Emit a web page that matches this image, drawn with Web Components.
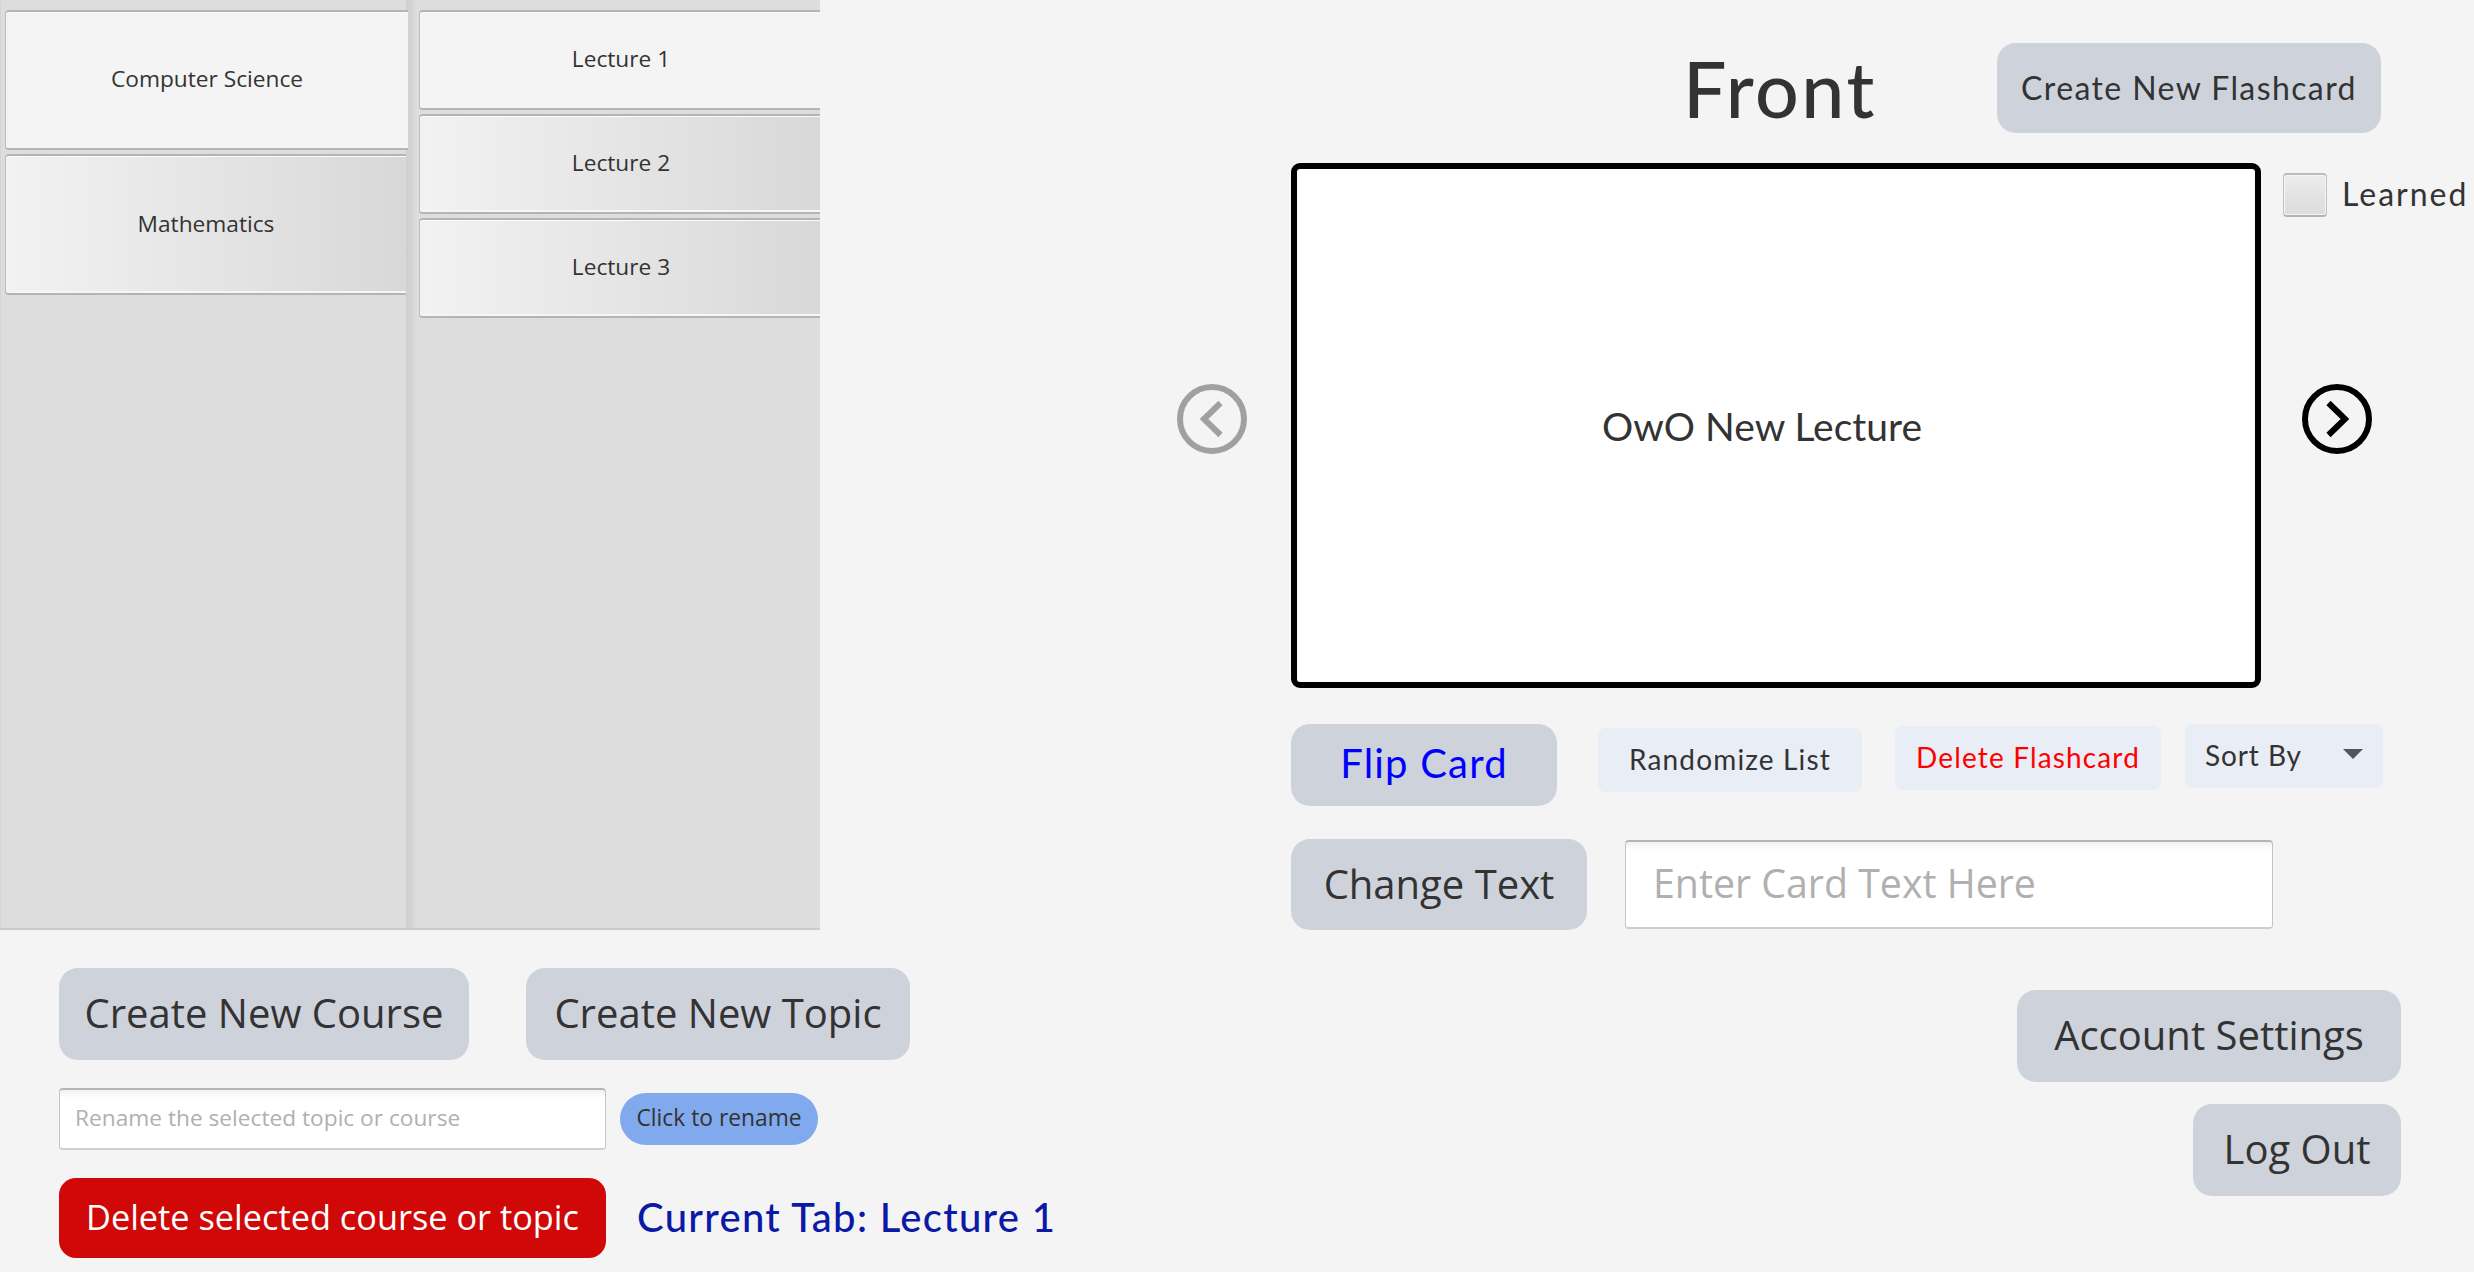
<!DOCTYPE html>
<html>
<head>
<meta charset="utf-8">
<title>Flashcards</title>
<style>
  html, body { margin: 0; padding: 0; background: #f4f4f4; }
  body { width: 2474px; height: 1272px; overflow: hidden; }
</style>
</head>
<body>
<fc-app></fc-app>
<script>
const SEGOE = '"Open Sans", "Noto Sans", sans-serif';
const QUICK = 'Lato, "Open Sans", sans-serif';

class FcButton extends HTMLElement {
  constructor() {
    super();
    this.attachShadow({ mode: "open" }).innerHTML = `
      <style>
        :host {
          display: inline-flex;
          align-items: center;
          justify-content: center;
          box-sizing: border-box;
          flex: none;
          padding-bottom: 3px;
          white-space: nowrap;
          border-radius: 19px;
          background: #ced2db;
          color: #333;
          font-family: ${SEGOE};
          font-size: 40px;
          cursor: pointer;
        }
        :host([kind="quick"]) { font-family: ${QUICK}; font-size: 32px; letter-spacing: 1.4px; padding-bottom: 2px; }
        :host([kind="light"]) {
          font-family: ${QUICK};
          font-size: 28px;
          letter-spacing: 1.15px;
          padding-bottom: 2px;
          background: #e9edf5;
          border-radius: 7px;
        }
      </style>
      <slot></slot>
    `;
  }
}

class FcInput extends HTMLElement {
  constructor() {
    super();
    this.attachShadow({ mode: "open" }).innerHTML = `
      <style>
        :host {
          display: flex;
          align-items: center;
          box-sizing: border-box;
          flex: none;
          padding-bottom: 3px;
          white-space: nowrap;
          background: linear-gradient(#f1f1f1 0, #fff 8px);
          border: 1px solid #c4c4c4;
          border-top: 2px solid #b5b5b5;
          border-bottom: 2px solid #cecece;
          border-radius: 4px;
          color: #b0b0b0;
          font-family: ${SEGOE};
        }
      </style>
      <slot></slot>
    `;
  }
}

class FcTab extends HTMLElement {
  constructor() {
    super();
    this.attachShadow({ mode: "open" }).innerHTML = `
      <style>
        :host {
          display: flex;
          align-items: center;
          justify-content: center;
          box-sizing: border-box;
          width: 403px;
          flex: none;
          margin-bottom: 4px;
          padding-bottom: 3px;
          border: 1px solid #bcbcbc;
          border-right: 0;
          border-top: 2px solid #b4b4b4;
          border-bottom: 2px solid #b4b4b4;
          border-radius: 4px 0 0 4px;
          background: linear-gradient(90deg, #f2f2f2, #d8d8d8);
          box-shadow: inset 0 1px 0 #fafafa, inset 0 -2px 0 #f6f6f6;
          color: #333;
          font-family: ${SEGOE};
          font-size: 22.7px;
        }
        :host([selected]) { background: #f4f4f4; }
      </style>
      <slot></slot>
    `;
  }
}

class FcColumn extends HTMLElement {
  constructor() {
    super();
    this.attachShadow({ mode: "open" }).innerHTML = `
      <style>
        :host {
          display: flex;
          flex-direction: column;
          box-sizing: border-box;
          padding-top: 10px;
          background: #dddddd;
        }
      </style>
      <slot></slot>
    `;
  }
}

class FcCheck extends HTMLElement {
  constructor() {
    super();
    this.attachShadow({ mode: "open" }).innerHTML = `
      <style>
        :host {
          display: flex;
          align-items: center;
          gap: 15px;
          color: #333;
          font-family: ${QUICK};
          font-size: 32px;
          letter-spacing: 2px;
          white-space: nowrap;
        }
        .box {
          box-sizing: border-box;
          width: 44px;
          height: 44px;
          flex: none;
          border: 1px solid #c2c2c2;
          border-top: 2px solid #bbb;
          border-bottom: 2px solid #b4b4b4;
          border-radius: 4px;
          background: linear-gradient(#ececec, #dcdcdc);
          box-shadow: inset 0 0 0 1px #f5f5f5;
        }
        .label { margin-top: -3px; }
      </style>
      <span class="box"></span><span class="label"><slot></slot></span>
    `;
  }
}

class FcArrow extends HTMLElement {
  constructor() {
    super();
    this.attachShadow({ mode: "open" });
  }
  connectedCallback() {
    const right = this.getAttribute("dir") === "right";
    const points = right ? "26.5,24 43,40 26.5,56" : "43.5,24 27,40 43.5,56";
    this.shadowRoot.innerHTML = `
      <style>
        :host { display: block; width: 70px; height: 70px; flex: none; cursor: pointer; color: #000; }
        :host([disabled]) { color: #a0a0a0; }
        svg { display: block; }
      </style>
      <svg width="70" height="70" viewBox="0 5 70 70" fill="none" stroke="currentColor" stroke-width="6">
        <circle cx="35" cy="40" r="32"/>
        <polyline points="${points}"/>
      </svg>
    `;
  }
}

class FcCard extends HTMLElement {
  constructor() {
    super();
    this.attachShadow({ mode: "open" }).innerHTML = `
      <style>
        :host {
          display: flex;
          align-items: center;
          justify-content: center;
          box-sizing: border-box;
          flex: none;
          width: 970px;
          height: 525px;
          padding-right: 28px;
          background: #fff;
          border: 6px solid #000;
          border-radius: 9px;
          color: #333;
          font-family: ${QUICK};
          font-size: 39px;
        }
      </style>
      <slot></slot>
    `;
  }
}

class FcSort extends HTMLElement {
  constructor() {
    super();
    this.attachShadow({ mode: "open" }).innerHTML = `
      <style>
        :host {
          display: flex;
          align-items: center;
          justify-content: space-between;
          box-sizing: border-box;
          flex: none;
          padding: 0 20px 2px 20px;
          background: #e9edf5;
          border-radius: 6px;
          color: #333;
          font-family: ${QUICK};
          font-size: 28px;
          letter-spacing: .9px;
          cursor: pointer;
        }
        .tri {
          width: 0;
          height: 0;
          border-left: 10.5px solid transparent;
          border-right: 10.5px solid transparent;
          border-top: 10px solid #555;
          margin-top: -3px;
        }
      </style>
      <slot></slot><span class="tri"></span>
    `;
  }
}

class FcApp extends HTMLElement {
  constructor() {
    super();
    this.attachShadow({ mode: "open" }).innerHTML = `
      <style>
        :host { display: flex; width: 2474px; height: 1272px; background: #f4f4f4; overflow: hidden; }
        .left { width: 1177px; flex: none; }
        .pane {
          display: flex;
          width: 820px;
          height: 930px;
          box-sizing: border-box;
          overflow: hidden;
          border-bottom: 2px solid #cbcbcb;
          background: #dddddd;
        }
        .pane fc-column:first-child {
          position: relative;
          z-index: 1;
          width: 406px;
          flex: none;
          padding-left: 4px;
          border-left: 1px solid #d4d4d4;
        }
        .pane fc-column:first-child fc-tab:not([selected]) { width: 401px; }
        .pane .divider { width: 10px; flex: none; background: linear-gradient(90deg, #cfcfcf, #d3d3d3 55%, #dddddd); }
        .pane fc-column:last-child { flex: 1; padding-left: 3px; }
        .pad { padding-left: 59px; }
        .row { display: flex; align-items: center; }
        .tools1 { gap: 57px; margin-top: 38px; }
        .tools2 { gap: 14px; margin-top: 28px; }
        .tools3 { gap: 31px; margin-top: 28px; }
        #course { width: 410px; height: 92px; }
        #topic { width: 384px; height: 92px; }
        #rename { width: 547px; height: 62px; padding-left: 15px; font-size: 22.7px; }
        #clickrename { width: 198px; height: 52px; background: #80a9ee; border-radius: 26px; font-size: 22.8px; }
        #del { width: 547px; height: 80px; background: #d10808; color: #fff; font-size: 34.3px; border-radius: 17px; }
        .tab-label { margin-top: -3px; color: #0a19a6; font: 500 40px ${QUICK}; letter-spacing: 1.3px; white-space: nowrap; }

        .right { flex: 1; padding-top: 43px; }
        .head { height: 90px; padding-left: 506px; gap: 125px; }
        h1 { margin: 0; width: 189px; color: #333; font: 500 77px/90px ${QUICK}; letter-spacing: 2.5px; text-align: center; white-space: nowrap; }
        #newcard { width: 384px; height: 90px; }
        .stage { display: flex; margin-top: 30px; }
        .stage > fc-arrow { margin-top: 221px; margin-right: 44px; }
        .side { margin-left: 22px; display: flex; flex-direction: column; align-items: flex-start; }
        .side fc-check { margin-top: 10px; }
        .side fc-arrow { margin: 167px 0 0 19px; }
        .actions { display: flex; align-items: flex-start; margin: 36px 0 0 114px; }
        #flip { width: 266px; height: 82px; padding-bottom: 5px; color: #0000ff; font: 40px ${QUICK}; letter-spacing: 1.2px; }
        #rand { width: 264px; height: 64px; margin: 4px 33px 0 41px; }
        #delcard { width: 266px; height: 64px; margin: 2px 24px 0 0; color: #f00; }
        fc-sort { width: 198px; height: 64px; }
        .edit { display: flex; align-items: flex-start; gap: 38px; margin: 33px 0 0 114px; }
        #change { width: 296px; height: 91px; }
        #cardtext { width: 648px; height: 89px; margin-top: 1px; padding-left: 27px; font-size: 39.3px; }
        .account { display: flex; flex-direction: column; align-items: flex-end; gap: 22px; width: 1224px; margin-top: 60px; }
        #settings { width: 384px; height: 92px; }
        #logout { width: 208px; height: 92px; }
      </style>
      <section class="left">
        <div class="pane">
          <fc-column>
            <fc-tab selected style="height:140px">Computer Science</fc-tab>
            <fc-tab style="height:141px">Mathematics</fc-tab>
          </fc-column>
          <div class="divider"></div>
          <fc-column>
            <fc-tab selected style="height:100px">Lecture 1</fc-tab>
            <fc-tab style="height:100px">Lecture 2</fc-tab>
            <fc-tab style="height:100px">Lecture 3</fc-tab>
          </fc-column>
        </div>
        <div class="pad">
          <div class="row tools1">
            <fc-button id="course">Create New Course</fc-button>
            <fc-button id="topic">Create New Topic</fc-button>
          </div>
          <div class="row tools2">
            <fc-input id="rename">Rename the selected topic or course</fc-input>
            <fc-button id="clickrename">Click to rename</fc-button>
          </div>
          <div class="row tools3">
            <fc-button id="del">Delete selected course or topic</fc-button>
            <span class="tab-label">Current Tab: Lecture 1</span>
          </div>
        </div>
      </section>
      <section class="right">
        <div class="row head">
          <h1>Front</h1>
          <fc-button id="newcard" kind="quick">Create New Flashcard</fc-button>
        </div>
        <div class="stage">
          <fc-arrow dir="left" disabled></fc-arrow>
          <fc-card>OwO New Lecture</fc-card>
          <div class="side">
            <fc-check>Learned</fc-check>
            <fc-arrow dir="right"></fc-arrow>
          </div>
        </div>
        <div class="actions">
          <fc-button id="flip">Flip Card</fc-button>
          <fc-button id="rand" kind="light">Randomize List</fc-button>
          <fc-button id="delcard" kind="light">Delete Flashcard</fc-button>
          <fc-sort>Sort By</fc-sort>
        </div>
        <div class="edit">
          <fc-button id="change">Change Text</fc-button>
          <fc-input id="cardtext">Enter Card Text Here</fc-input>
        </div>
        <div class="account">
          <fc-button id="settings">Account Settings</fc-button>
          <fc-button id="logout">Log Out</fc-button>
        </div>
      </section>
    `;
  }
}

customElements.define("fc-button", FcButton);
customElements.define("fc-input", FcInput);
customElements.define("fc-tab", FcTab);
customElements.define("fc-column", FcColumn);
customElements.define("fc-check", FcCheck);
customElements.define("fc-arrow", FcArrow);
customElements.define("fc-card", FcCard);
customElements.define("fc-sort", FcSort);
customElements.define("fc-app", FcApp);
</script>
</body>
</html>
